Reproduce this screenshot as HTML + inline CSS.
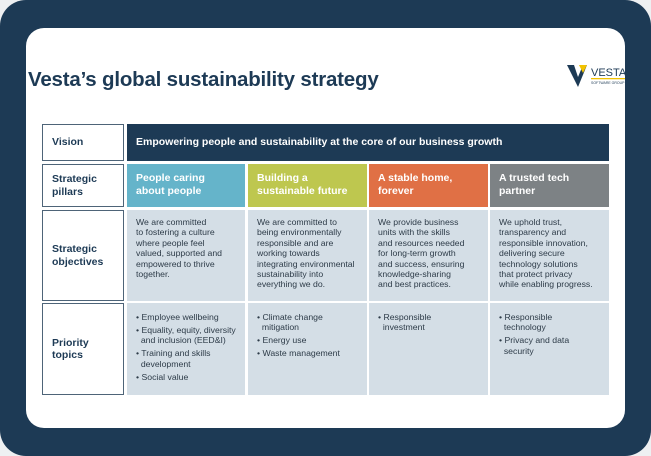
<!DOCTYPE html>
<html><head><meta charset="utf-8"><style>
*{margin:0;padding:0;box-sizing:border-box}
body{width:651px;height:456px;background:#eef0f2;font-family:"Liberation Sans",sans-serif;position:relative;overflow:hidden}
.outer{position:absolute;left:0;top:0;width:651px;height:456px;background:#1d3a55;border-radius:26px}
.inner{position:absolute;left:26px;top:28px;width:599px;height:400px;background:#fff;border-radius:18px;overflow:hidden}
h1{position:absolute;left:2px;top:40px;font-size:20.5px;font-weight:bold;color:#1d3a55;letter-spacing:-0.2px}
.c{position:absolute}
.lab{border:1.5px solid #4e6478;background:#fff;color:#1d3a55;font-weight:bold;font-size:10.5px;line-height:12.5px;padding-left:9px;display:flex;align-items:center}
.p{color:#fff;font-weight:bold;font-size:10.5px;line-height:12.5px;padding:8px 9px}
.t{background:#d4dee6;color:#2d3b48;font-size:8.7px;line-height:10.4px;padding:7px 9px}
.t div{margin-bottom:2.5px}
</style></head><body>
<div class="outer"></div>
<div class="inner">
<h1>Vesta’s global sustainability strategy</h1>
<svg class="c" style="left:540px;top:35px" width="60" height="25" viewBox="0 0 60 25">
<path d="M1 2 L8 2 L12 14 L17 2 L21 2 L12 24 Z" fill="#1d3a55"/>
<path d="M13 2 L21 2 L17 10 Z" fill="#f2c200"/>
<text x="25" y="13" font-size="11" font-family="Liberation Sans" fill="#1d3a55">VESTA</text>
<rect x="25" y="15" width="35" height="1.3" fill="#f2c200"/>
<text x="25" y="21" font-size="3.5" font-family="Liberation Sans" fill="#1d3a55">SOFTWARE GROUP</text>
</svg>
</div>
<div class="c lab" style="left:42px;top:124px;width:82px;height:37px">Vision</div>
<div class="c" style="left:127px;top:124px;width:482px;height:37px;background:#1d3a55;color:#fff;font-weight:bold;font-size:10.5px;padding-left:9px;line-height:37px">Empowering people and sustainability at the core of our business growth</div>
<div class="c lab" style="left:42px;top:164px;width:82px;height:43px">Strategic<br>pillars</div>
<div class="c p" style="left:127px;top:164px;width:118px;height:43px;background:#65b4ca">People caring<br>about people</div>
<div class="c p" style="left:248px;top:164px;width:119px;height:43px;background:#bec74f">Building a<br>sustainable future</div>
<div class="c p" style="left:369px;top:164px;width:119px;height:43px;background:#e07045">A stable home,<br>forever</div>
<div class="c p" style="left:490px;top:164px;width:119px;height:43px;background:#7d8285">A trusted tech<br>partner</div>
<div class="c lab" style="left:42px;top:210px;width:82px;height:91px">Strategic<br>objectives</div>
<div class="c t" style="left:127px;top:210px;width:118px;height:91px">We are committed<br>to fostering a culture<br>where people feel<br>valued, supported and<br>empowered to thrive<br>together.</div>
<div class="c t" style="left:248px;top:210px;width:119px;height:91px">We are committed to<br>being environmentally<br>responsible and are<br>working towards<br>integrating environmental<br>sustainability into<br>everything we do.</div>
<div class="c t" style="left:369px;top:210px;width:119px;height:91px">We provide business<br>units with the skills<br>and resources needed<br>for long-term growth<br>and success, ensuring<br>knowledge-sharing<br>and best practices.</div>
<div class="c t" style="left:490px;top:210px;width:119px;height:91px">We uphold trust,<br>transparency and<br>responsible innovation,<br>delivering secure<br>technology solutions<br>that protect privacy<br>while enabling progress.</div>
<div class="c lab" style="left:42px;top:303px;width:82px;height:92px">Priority<br>topics</div>
<div class="c t" style="left:127px;top:303px;width:118px;height:92px;padding-top:9px"><div>• Employee wellbeing</div><div>• Equality, equity, diversity<br>&nbsp;&nbsp;and inclusion (EED&amp;I)</div><div>• Training and skills<br>&nbsp;&nbsp;development</div><div>• Social value</div></div>
<div class="c t" style="left:248px;top:303px;width:119px;height:92px;padding-top:9px"><div>• Climate change<br>&nbsp;&nbsp;mitigation</div><div>• Energy use</div><div>• Waste management</div></div>
<div class="c t" style="left:369px;top:303px;width:119px;height:92px;padding-top:9px"><div>• Responsible<br>&nbsp;&nbsp;investment</div></div>
<div class="c t" style="left:490px;top:303px;width:119px;height:92px;padding-top:9px"><div>• Responsible<br>&nbsp;&nbsp;technology</div><div>• Privacy and data<br>&nbsp;&nbsp;security</div></div>
</body></html>
